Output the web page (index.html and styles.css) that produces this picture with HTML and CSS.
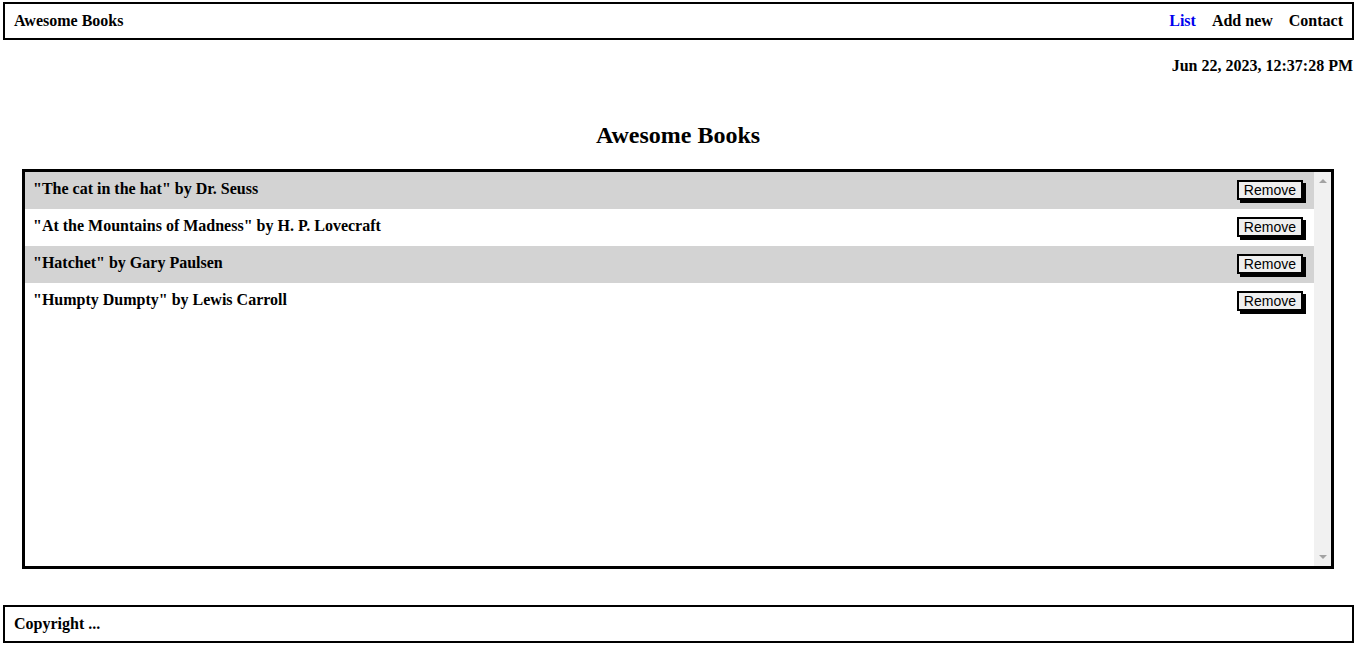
FILE: index.html
```html
<!DOCTYPE html>
<html lang="en">
<head>
<meta charset="utf-8">
<title>Awesome Books</title>
<link rel="stylesheet" href="styles.css">
</head>
<body>
<header class="nav">
  <span class="brand">Awesome Books</span>
  <ul class="nav-links">
    <li><a class="nav-link active" href="#">List</a></li>
    <li><a class="nav-link" href="#">Add new</a></li>
    <li><a class="nav-link" href="#">Contact</a></li>
  </ul>
</header>
<p class="date">Jun 22, 2023, 12:37:28 PM</p>
<main class="main">
  <h2 class="title">Awesome Books</h2>
  <div class="book-box">
    <div class="book-list">
      <div class="book odd"><p class="book-text">"The cat in the hat" by Dr. Seuss</p><button class="remove">Remove</button></div>
      <div class="book"><p class="book-text">"At the Mountains of Madness" by H. P. Lovecraft</p><button class="remove">Remove</button></div>
      <div class="book odd"><p class="book-text">"Hatchet" by Gary Paulsen</p><button class="remove">Remove</button></div>
      <div class="book"><p class="book-text">"Humpty Dumpty" by Lewis Carroll</p><button class="remove">Remove</button></div>
    </div>
    <div class="scrollbar" aria-hidden="true">
      <span class="arrow up"></span>
      <span class="arrow down"></span>
    </div>
  </div>
</main>
<footer class="footer">Copyright ...</footer>
</body>
</html>
```
FILE: styles.css
```css
* { box-sizing: border-box; }
body {
  margin: 0;
  padding: 2px 2px 0 3px;
  font-family: "Liberation Serif", "Times New Roman", serif;
  font-size: 16px;
  font-weight: bold;
  color: #000;
}
.nav {
  display: flex;
  justify-content: space-between;
  align-items: center;
  height: 38px;
  border: 2px solid #000;
  padding: 0 9px 0 9px;
}
.brand { font-size: 16px; }
.nav-links {
  display: flex;
  gap: 16px;
  list-style: none;
  margin: 0;
  padding: 0;
}
.nav-link { color: #000; text-decoration: none; }
.nav-link.active { color: #0000ee; }
.date {
  margin: 17px 1px 0 0;
  text-align: right;
  line-height: 18px;
}
.main {
  padding: 0 20px 0 19px;
}
.title {
  margin: 46px 0 0;
  text-align: center;
  font-size: 24px;
  line-height: 28px;
}
.book-box {
  display: flex;
  margin-top: 20px;
  height: 400px;
  border: 3px solid #000;
}
.book-list {
  flex: 1;
  overflow: hidden;
}
.book {
  display: flex;
  justify-content: space-between;
  align-items: flex-start;
  height: 37px;
  padding: 0 11px 0 8px;
}
.book.odd { background: #d3d3d3; }
.book-text {
  margin: 8px 0 0;
  line-height: 18px;
}
.remove {
  margin-top: 8px;
  font-family: "Liberation Sans", Arial, sans-serif;
  font-size: 14px;
  font-weight: normal;
  height: 20px;
  padding: 0 5px;
  background: #efefef;
  border: 2px solid #000;
  box-shadow: 3px 3px 0 #000;
  color: #000;
  line-height: 14px;
}
.scrollbar {
  width: 17px;
  background: #f1f1f1;
  display: flex;
  flex-direction: column;
  justify-content: space-between;
  align-items: center;
  padding: 7px 0 7px;
}
.arrow {
  width: 0;
  height: 0;
  border-left: 4px solid transparent;
  border-right: 4px solid transparent;
}
.arrow.up { border-bottom: 4px solid #a3a3a3; }
.arrow.down { border-top: 4px solid #a3a3a3; }
.footer {
  margin-top: 36px;
  height: 38px;
  border: 2px solid #000;
  padding: 0 9px;
  display: flex;
  align-items: center;
}
```
